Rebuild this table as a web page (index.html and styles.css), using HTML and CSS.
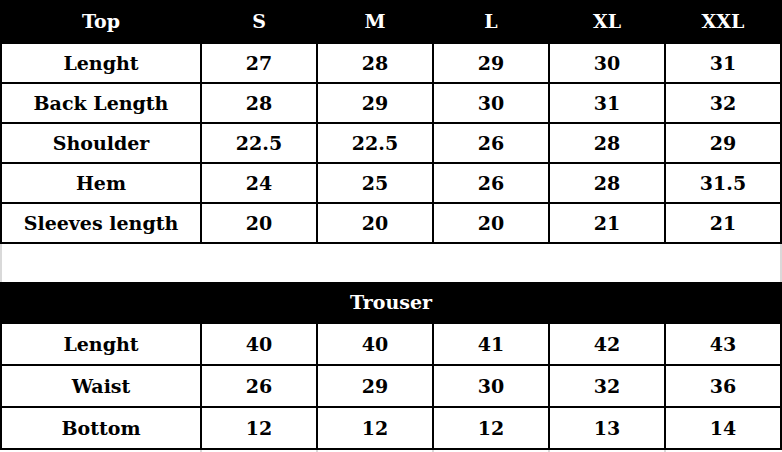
FILE: index.html
```html
<!DOCTYPE html>
<html lang="en">
<head>
<meta charset="utf-8">
<title>Size chart</title>
<link rel="stylesheet" href="styles.css">
</head>
<body>
<div class="chart">
  <div class="grid top-table">
    <div class="cell head">Top</div>
    <div class="cell head">S</div>
    <div class="cell head">M</div>
    <div class="cell head">L</div>
    <div class="cell head">XL</div>
    <div class="cell head">XXL</div>

    <div class="cell">Lenght</div><div class="cell">27</div><div class="cell">28</div><div class="cell">29</div><div class="cell">30</div><div class="cell">31</div>
    <div class="cell">Back Length</div><div class="cell">28</div><div class="cell">29</div><div class="cell">30</div><div class="cell">31</div><div class="cell">32</div>
    <div class="cell">Shoulder</div><div class="cell">22.5</div><div class="cell">22.5</div><div class="cell">26</div><div class="cell">28</div><div class="cell">29</div>
    <div class="cell">Hem</div><div class="cell">24</div><div class="cell">25</div><div class="cell">26</div><div class="cell">28</div><div class="cell">31.5</div>
    <div class="cell">Sleeves length</div><div class="cell">20</div><div class="cell">20</div><div class="cell">20</div><div class="cell">21</div><div class="cell">21</div>
  </div>

  <div class="spacer"></div>

  <div class="grid trouser-table">
    <div class="cell head span">Trouser</div>

    <div class="cell">Lenght</div><div class="cell">40</div><div class="cell">40</div><div class="cell">41</div><div class="cell">42</div><div class="cell">43</div>
    <div class="cell">Waist</div><div class="cell">26</div><div class="cell">29</div><div class="cell">30</div><div class="cell">32</div><div class="cell">36</div>
    <div class="cell">Bottom</div><div class="cell">12</div><div class="cell">12</div><div class="cell">12</div><div class="cell">13</div><div class="cell">14</div>
  </div>

  <div class="grid tail">
    <div class="tick"></div><div class="tick"></div><div class="tick"></div><div class="tick"></div><div class="tick"></div><div class="tick last"></div>
  </div>
</div>
</body>
</html>
```

FILE: styles.css
```css
html, body {
  margin: 0;
  padding: 0;
  background: #ffffff;
}

.chart {
  width: 782px;
  font-family: "DejaVu Serif", "Liberation Serif", serif;
  font-weight: bold;
  font-size: 19px;
  color: #000;
}

.grid {
  display: grid;
  grid-template-columns: 200px repeat(5, 116px);
  border-left: 2px solid #000;
}

.cell {
  box-sizing: border-box;
  display: flex;
  align-items: center;
  justify-content: center;
  border-right: 2px solid #000;
  border-bottom: 2px solid #000;
  white-space: nowrap;
}

.top-table .cell { height: 40px; }
.top-table .head { height: 44px; }

.trouser-table .cell { height: 42px; }

.head {
  background: #000;
  color: #fff;
}

.span {
  grid-column: 1 / -1;
}

.spacer {
  height: 38px;
  box-sizing: border-box;
  border-left: 2px solid #d9d9d9;
  border-right: 2px solid #d9d9d9;
}

.tail {
  border-left-color: transparent;
  height: 2px;
}

.tick {
  height: 2px;
  box-sizing: border-box;
  border-right: 2px solid #d9d9d9;
}

.tick.last {
  border-right-color: transparent;
}
```
